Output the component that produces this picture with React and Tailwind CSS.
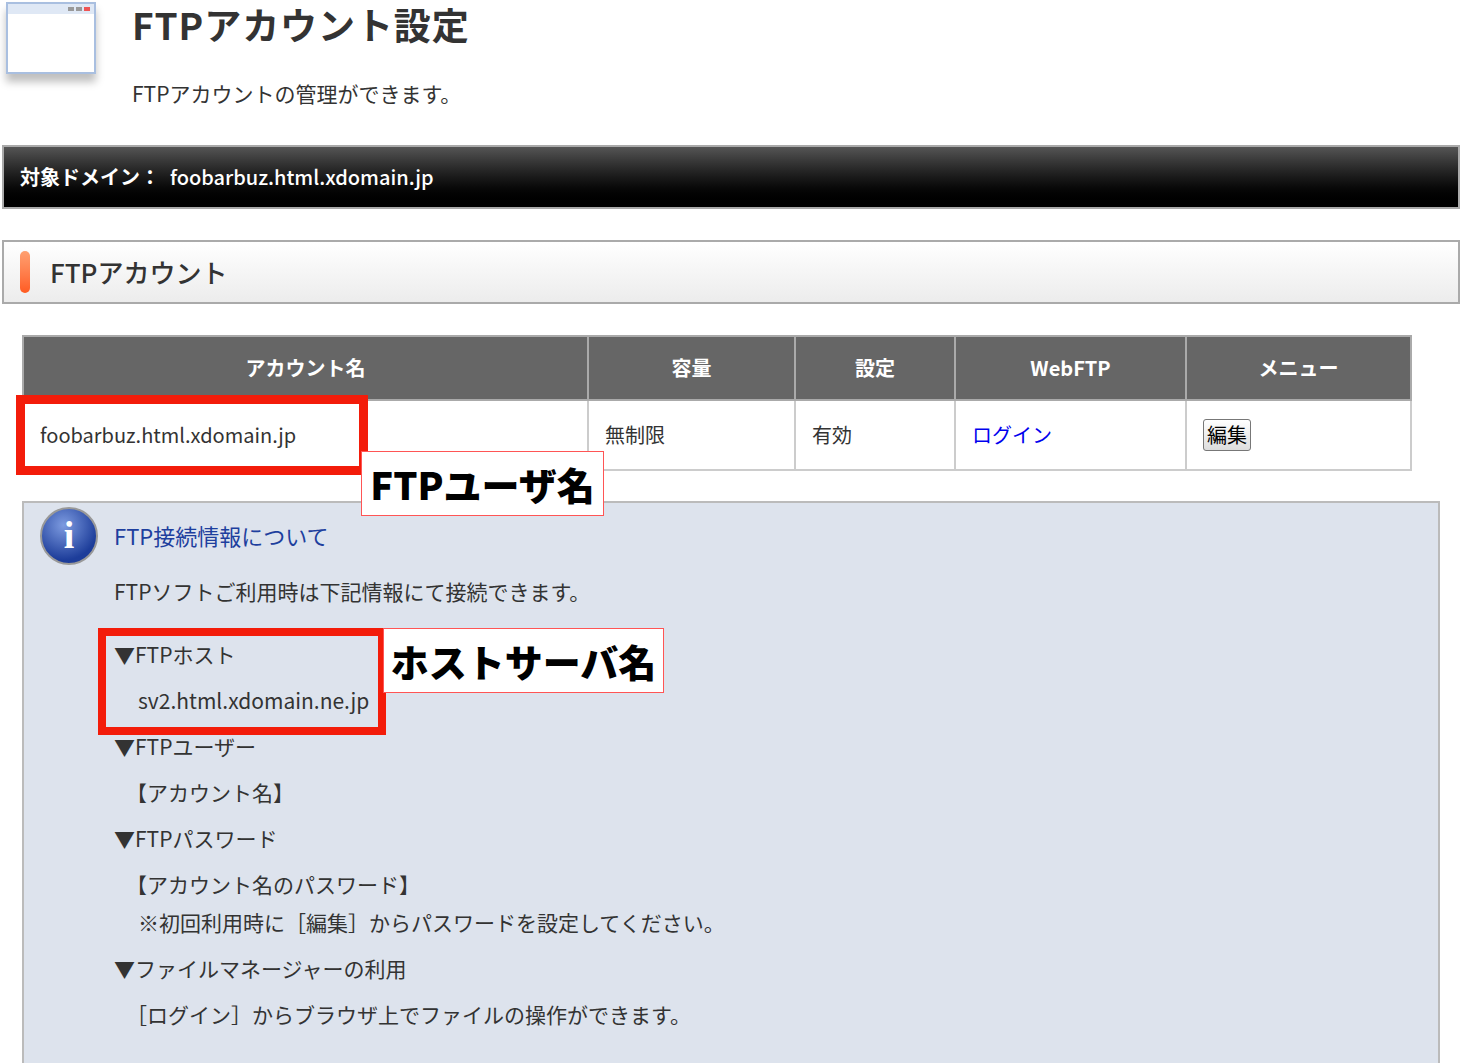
export default function App() {
  const f = { fontFamily: '"Noto Sans CJK JP", "Noto Sans", sans-serif' };
  return (
    <div className="relative w-[1460px] h-[1063px] overflow-hidden bg-white text-[#333]" style={f}>
      <div className="flex items-start">
        <div className="w-[132px] h-[88px] pl-[6px] pt-[2px]">
          <div className="w-[90px] h-[72px] border-2 border-[#a9bfe0] bg-white shadow-[0_8px_8px_rgba(0,0,0,0.25)] flex flex-col">
            <div className="h-[10px] bg-[#dfe8f5] flex justify-end items-center pr-1 gap-[2px]">
              <div className="w-[6px] h-[4px] bg-[#999]" /><div className="w-[6px] h-[4px] bg-[#999]" /><div className="w-[6px] h-[4px] bg-[#e55]" />
            </div>
          </div>
        </div>
        <div>
          <h1 className="text-[37px] font-bold leading-[48px] mt-0 text-[#333] tracking-wide">FTPアカウント設定</h1>
          <p className="text-[21px] mt-[30px]">FTPアカウントの管理ができます。</p>
        </div>
      </div>
      <div className="mt-[35px] ml-[2px] h-[64px] border-2 border-[#aaa] bg-gradient-to-b from-[#555] via-[#1a1a1a] to-black flex items-center pl-[16px] text-white text-[20px] font-bold">
        対象ドメイン：<span className="ml-[10px] font-medium">foobarbuz.html.xdomain.jp</span>
      </div>
      <div className="mt-[31px] ml-[2px] h-[64px] border-2 border-[#aaa] bg-gradient-to-b from-white to-[#ececec] flex items-center pl-[16px]">
        <div className="w-[10px] h-[42px] rounded-full bg-gradient-to-b from-[#ffa070] to-[#ff5a1f]" />
        <span className="ml-[20px] text-[26px] font-medium text-[#333]">FTPアカウント</span>
      </div>
      <table className="mt-[31px] ml-[22px] w-[1390px] border-collapse text-[20px]">
        <thead>
          <tr className="h-[64px] bg-[#666] text-white font-bold">
            <th className="w-[565px] border-2 border-[#aaa]">アカウント名</th>
            <th className="w-[207px] border-2 border-[#aaa]">容量</th>
            <th className="w-[160px] border-2 border-[#aaa]">設定</th>
            <th className="w-[231px] border-2 border-[#aaa]">WebFTP</th>
            <th className="border-2 border-[#aaa]">メニュー</th>
          </tr>
        </thead>
        <tbody>
          <tr className="h-[70px]">
            <td className="border-2 border-[#ccc] pl-[16px]">foobarbuz.html.xdomain.jp</td>
            <td className="border-2 border-[#ccc] pl-[16px]">無制限</td>
            <td className="border-2 border-[#ccc] pl-[16px]">有効</td>
            <td className="border-2 border-[#ccc] pl-[16px] text-[#0000ee]">ログイン</td>
            <td className="border-2 border-[#ccc] pl-[16px]"><span className="inline-block border border-[#777] rounded-[3px] bg-gradient-to-b from-white to-[#ddd] px-[3px] text-black">編集</span></td>
          </tr>
        </tbody>
      </table>
      <div className="mt-[30px] ml-[22px] w-[1418px] h-[600px] border-2 border-[#bbb] bg-[#dde3ed] pl-[16px] pt-[4px] text-[21px] text-[#333]">
        <div className="flex items-center gap-[16px] h-[58px]">
          <div className="w-[58px] h-[58px] rounded-full border-2 border-[#999] bg-[radial-gradient(circle_at_40%_30%,#7d9be0,#1d3d9a_70%)] flex items-center justify-center text-white text-[38px] font-bold" style={{ fontFamily: '"Liberation Serif", serif' }}>i</div>
          <span className="text-[#1e3f9e] text-[22px]">FTP接続情報について</span>
        </div>
        <div className="pl-[74px]">
          <p className="h-[66px] leading-[52px]">FTPソフトご利用時は下記情報にて接続できます。</p>
          <p className="h-[46px] leading-[46px]">▼FTPホスト</p>
          <p className="h-[46px] leading-[46px] pl-[24px]">sv2.html.xdomain.ne.jp</p>
          <p className="h-[46px] leading-[46px]">▼FTPユーザー</p>
          <p className="h-[46px] leading-[46px] pl-[12px]">【アカウント名】</p>
          <p className="h-[46px] leading-[46px]">▼FTPパスワード</p>
          <p className="h-[46px] leading-[46px] pl-[12px]">【アカウント名のパスワード】</p>
          <p className="h-[38px] leading-[30px] pl-[24px]">※初回利用時に［編集］からパスワードを設定してください。</p>
          <p className="h-[46px] leading-[46px]">▼ファイルマネージャーの利用</p>
          <p className="h-[46px] leading-[46px] pl-[12px]">［ログイン］からブラウザ上でファイルの操作ができます。</p>
        </div>
      </div>
      <div className="absolute left-[16px] top-[395px] w-[352px] h-[80px] border-[9px] border-[#f31c0a]" />
      <div className="absolute left-[361px] top-[451px] w-[243px] h-[65px] bg-white border border-[#f55] flex items-center justify-center text-[38px] font-black text-black">FTPユーザ名</div>
      <div className="absolute left-[98px] top-[628px] w-[288px] h-[107px] border-[8px] border-[#f31c0a]" />
      <div className="absolute left-[383px] top-[628px] w-[281px] h-[65px] bg-white border border-[#f55] flex items-center justify-center text-[38px] font-black text-black">ホストサーバ名</div>
    </div>
  );
}
